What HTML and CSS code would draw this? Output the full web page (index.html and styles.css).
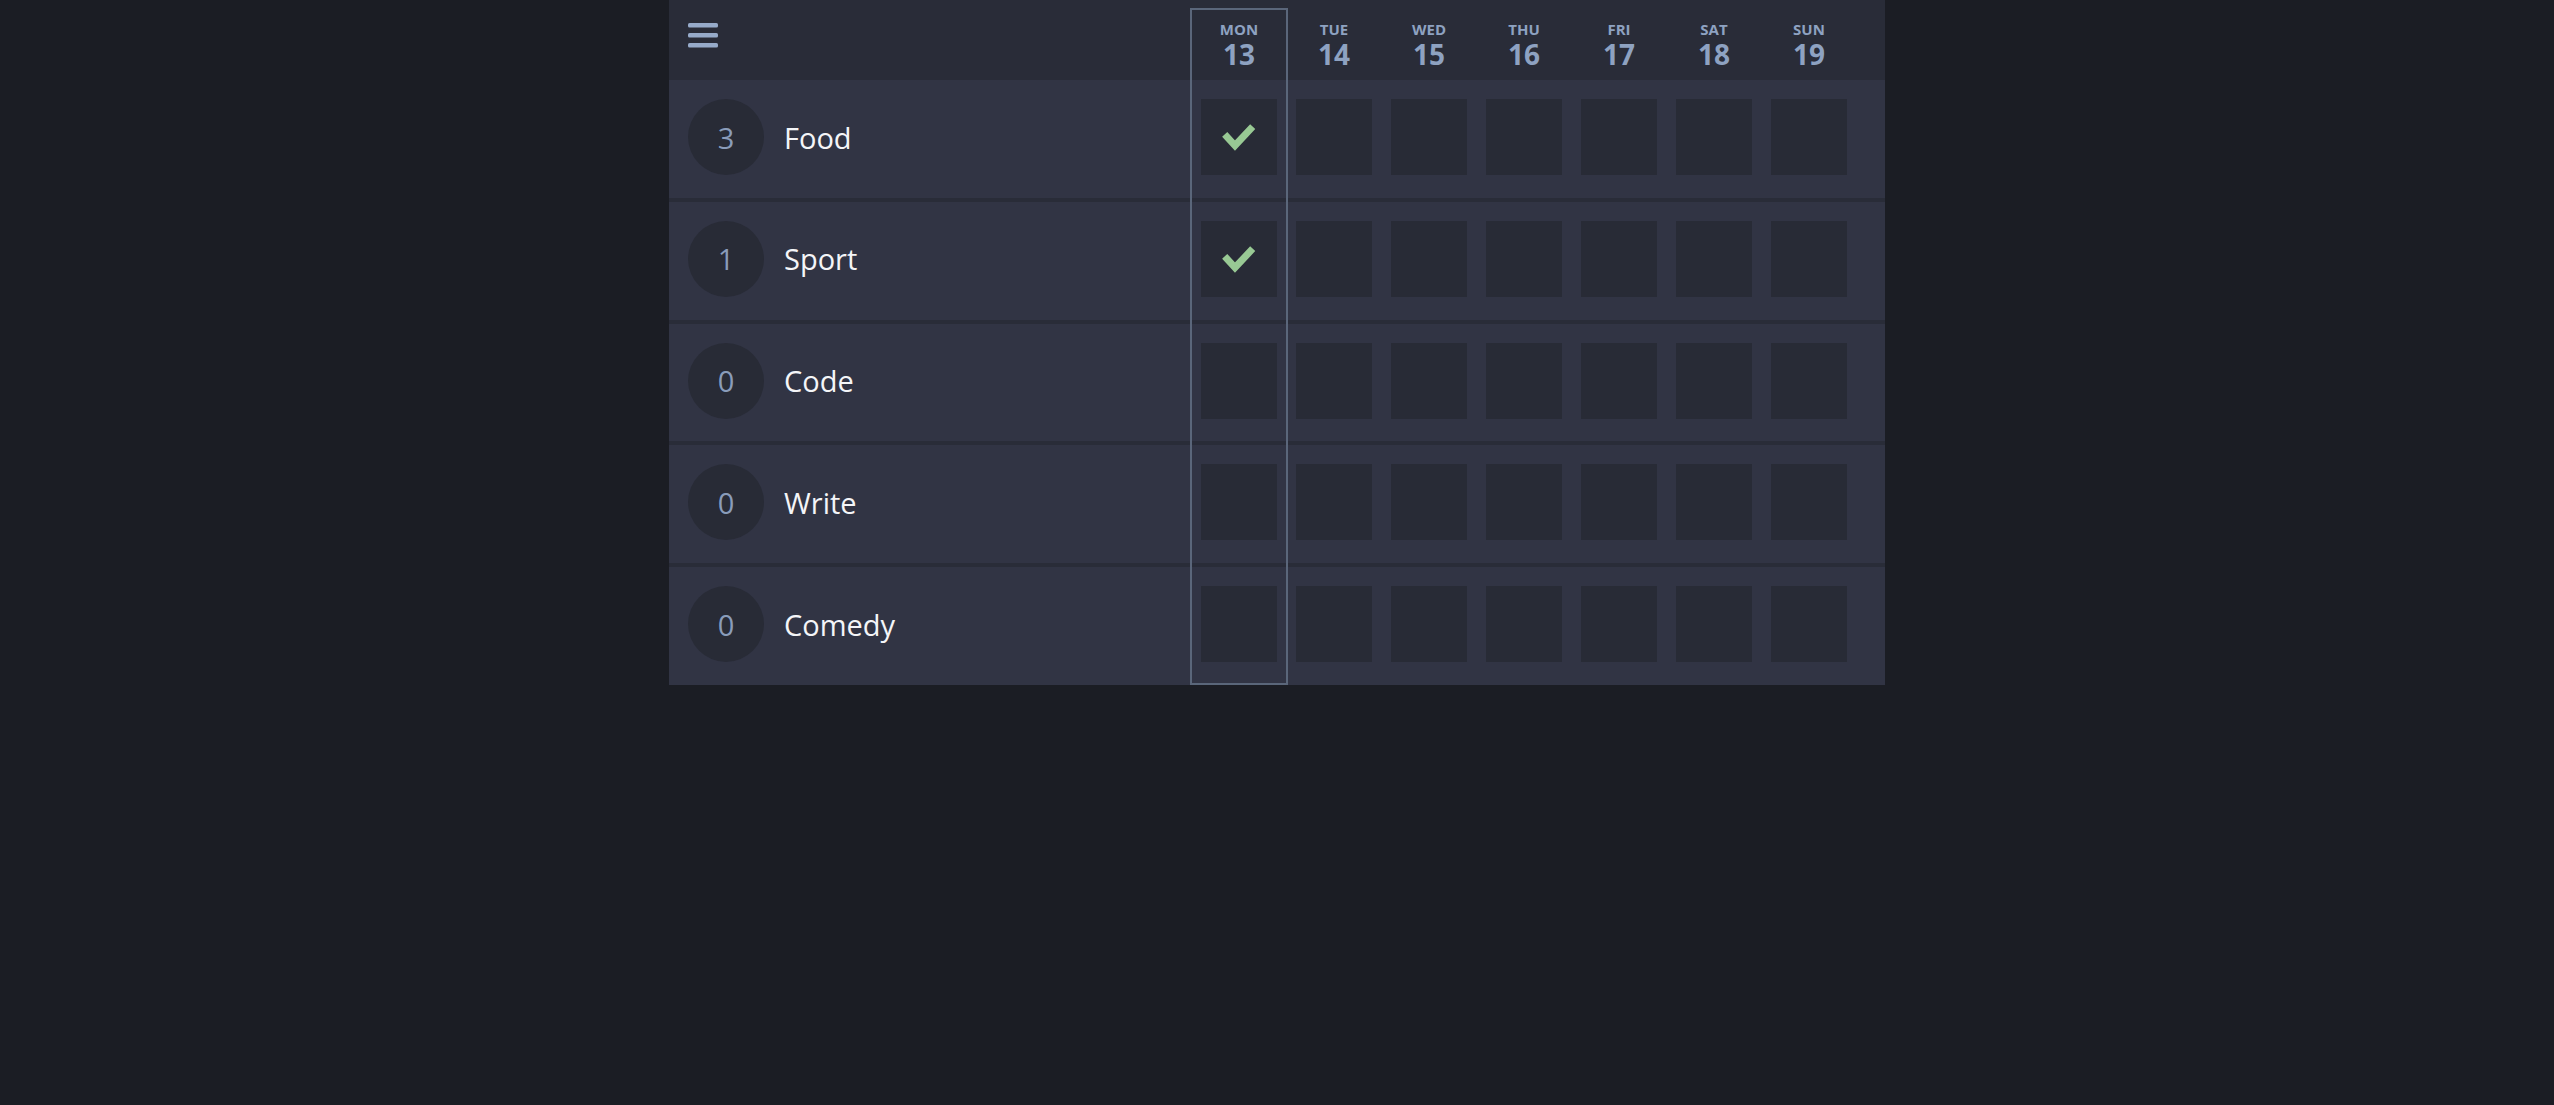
FILE: index.html
```html
<!DOCTYPE html>
<html lang="en">
<head>
<meta charset="utf-8">
<title>Habits</title>
<link rel="stylesheet" href="styles.css">
</head>
<body>
<div class="app">
  <div class="today-outline"></div>
  <div class="header">
    <div class="header-left">
      <svg class="menu" viewBox="0 0 30 25" width="30" height="25">
        <rect x="0" y="0" width="30" height="4.6" rx="1.6"/>
        <rect x="0" y="10" width="30" height="4.6" rx="1.6"/>
        <rect x="0" y="20" width="30" height="4.6" rx="1.6"/>
      </svg>
    </div>
    <div class="days">
      <div class="day"><span class="dow">MON</span><span class="dom">13</span></div>
      <div class="day"><span class="dow">TUE</span><span class="dom">14</span></div>
      <div class="day"><span class="dow">WED</span><span class="dom">15</span></div>
      <div class="day"><span class="dow">THU</span><span class="dom">16</span></div>
      <div class="day"><span class="dow">FRI</span><span class="dom">17</span></div>
      <div class="day"><span class="dow">SAT</span><span class="dom">18</span></div>
      <div class="day"><span class="dow">SUN</span><span class="dom">19</span></div>
    </div>
  </div>

  <div class="row">
    <div class="row-left"><div class="count">3</div><div class="name">Food</div></div>
    <div class="days">
      <div class="cell"><svg class="check" viewBox="0 0 76 76"><polyline points="23.7,35.3 34,46.5 51.7,27.7"/></svg></div>
      <div class="cell"></div><div class="cell"></div><div class="cell"></div><div class="cell"></div><div class="cell"></div><div class="cell"></div>
    </div>
  </div>

  <div class="row">
    <div class="row-left"><div class="count">1</div><div class="name">Sport</div></div>
    <div class="days">
      <div class="cell"><svg class="check" viewBox="0 0 76 76"><polyline points="23.7,35.3 34,46.5 51.7,27.7"/></svg></div>
      <div class="cell"></div><div class="cell"></div><div class="cell"></div><div class="cell"></div><div class="cell"></div><div class="cell"></div>
    </div>
  </div>

  <div class="row">
    <div class="row-left"><div class="count">0</div><div class="name">Code</div></div>
    <div class="days">
      <div class="cell"></div><div class="cell"></div><div class="cell"></div><div class="cell"></div><div class="cell"></div><div class="cell"></div><div class="cell"></div>
    </div>
  </div>

  <div class="row">
    <div class="row-left"><div class="count">0</div><div class="name">Write</div></div>
    <div class="days">
      <div class="cell"></div><div class="cell"></div><div class="cell"></div><div class="cell"></div><div class="cell"></div><div class="cell"></div><div class="cell"></div>
    </div>
  </div>

  <div class="row">
    <div class="row-left"><div class="count">0</div><div class="name">Comedy</div></div>
    <div class="days">
      <div class="cell"></div><div class="cell"></div><div class="cell"></div><div class="cell"></div><div class="cell"></div><div class="cell"></div><div class="cell"></div>
    </div>
  </div>
</div>
</body>
</html>
```

FILE: styles.css
```css
html, body {
  margin: 0;
  padding: 0;
  background: #1b1d24;
}

body {
  font-family: "Open Sans", "Noto Sans", sans-serif;
}

.app {
  position: relative;
  width: 1216px;
  margin: 0 auto;
  background: #313444;
}

.header {
  display: flex;
  height: 80px;
  background: #292c38;
}

.header-left {
  flex: 1;
  padding: 23px 0 0 19px;
}

.menu {
  display: block;
  fill: #97abca;
}

.days {
  display: grid;
  grid-template-columns: repeat(7, 76px);
  column-gap: 19px;
  margin-right: 38px;
}

.day {
  display: flex;
  flex-direction: column;
  align-items: center;
  padding-top: 21px;
  color: #8ea2c1;
  font-weight: 700;
}

.dow {
  font-size: 15px;
  line-height: 16px;
}

.dom {
  font-size: 28px;
  line-height: 30px;
  margin-top: 2px;
}

.row {
  display: flex;
  align-items: flex-start;
  padding: 19px 0 22.75px;
  border-bottom: 4px solid #292c38;
}

.row:last-child {
  border-bottom: none;
}

.row-left {
  flex: 1;
  display: flex;
  align-items: center;
  padding-left: 19px;
}

.count {
  width: 76px;
  height: 76px;
  border-radius: 50%;
  background: #282b36;
  color: #8a9cba;
  font-size: 29px;
  display: flex;
  align-items: center;
  justify-content: center;
}

.name {
  margin-left: 20px;
  font-size: 29px;
  color: #f4f5f8;
}

.cell {
  width: 76px;
  height: 76px;
  background: #282b36;
}

.check {
  display: block;
  width: 76px;
  height: 76px;
}

.check polyline {
  fill: none;
  stroke: #98c994;
  stroke-width: 7;
  stroke-linecap: butt;
  stroke-linejoin: miter;
}

.today-outline {
  position: absolute;
  left: 521px;
  top: 8px;
  width: 94px;
  height: 673px;
  border: 2px solid #5a667a;
  pointer-events: none;
}
```
